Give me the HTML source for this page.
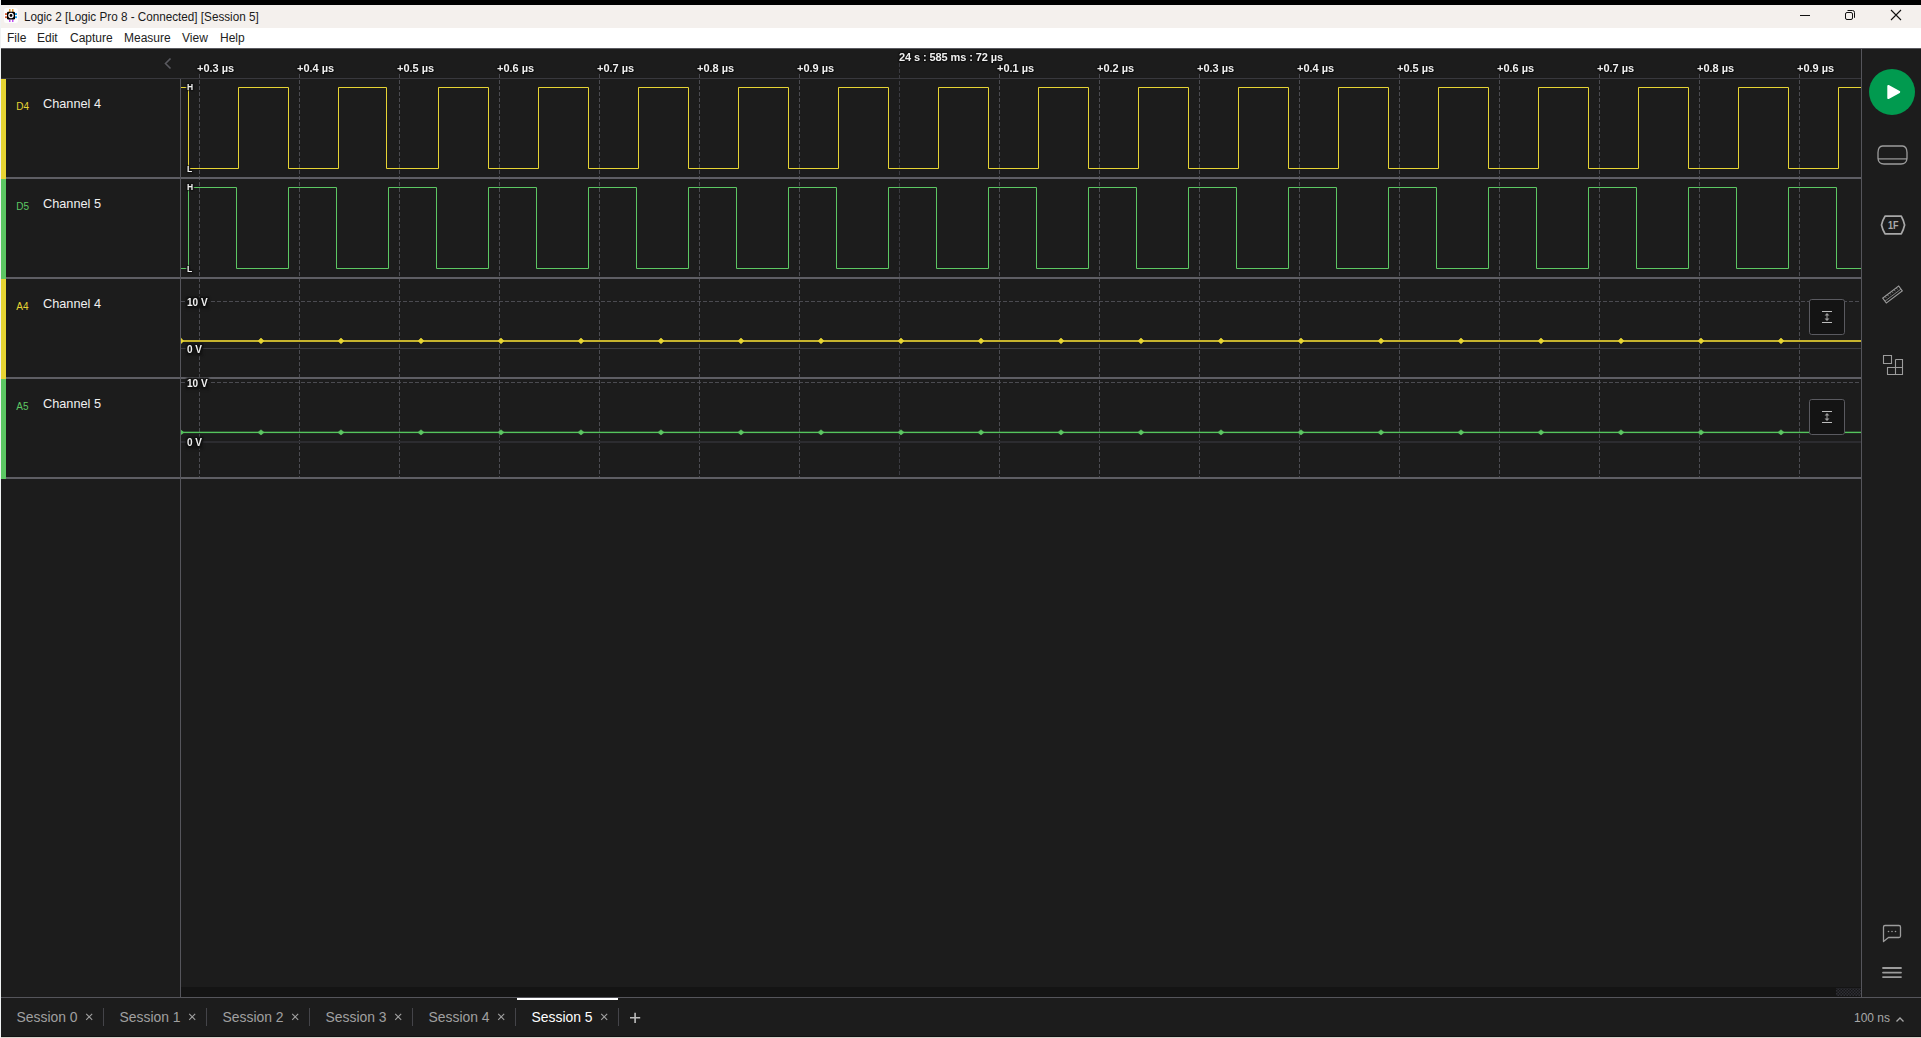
<!DOCTYPE html>
<html><head><meta charset="utf-8"><style>
html,body{margin:0;padding:0;}
body{width:1921px;height:1038px;overflow:hidden;position:relative;background:#1c1c1c;font-family:"Liberation Sans",sans-serif;}
.t{position:absolute;white-space:nowrap;}
#top{position:absolute;left:0;top:0;width:1921px;height:5px;background:#000;}
#title{position:absolute;left:0;top:5px;width:1921px;height:23px;background:#f4f0ed;}
#menu{position:absolute;left:0;top:28px;width:1921px;height:20px;background:#fff;}
#lc{position:absolute;left:0;top:0;width:1px;height:1038px;background:#f0f2f3;}
svg{position:absolute;left:0;top:0;}
</style></head><body>
<div id="top"></div><div id="title"></div><div id="menu"></div>
<svg width="1921" height="1038" viewBox="0 0 1921 1038">
<rect x="0" y="48" width="1921" height="990" fill="#1c1c1c" />
<rect x="0" y="48" width="1921" height="1" fill="#5a5a60" />
<rect x="1" y="78" width="1861" height="1" fill="#38383d" />
<line x1="199.5" y1="74" x2="199.5" y2="478" stroke="#4b4b51" stroke-width="1" stroke-dasharray="4 2"/>
<line x1="299.5" y1="74" x2="299.5" y2="478" stroke="#4b4b51" stroke-width="1" stroke-dasharray="4 2"/>
<line x1="399.5" y1="74" x2="399.5" y2="478" stroke="#4b4b51" stroke-width="1" stroke-dasharray="4 2"/>
<line x1="499.5" y1="74" x2="499.5" y2="478" stroke="#4b4b51" stroke-width="1" stroke-dasharray="4 2"/>
<line x1="599.5" y1="74" x2="599.5" y2="478" stroke="#4b4b51" stroke-width="1" stroke-dasharray="4 2"/>
<line x1="699.5" y1="74" x2="699.5" y2="478" stroke="#4b4b51" stroke-width="1" stroke-dasharray="4 2"/>
<line x1="799.5" y1="74" x2="799.5" y2="478" stroke="#4b4b51" stroke-width="1" stroke-dasharray="4 2"/>
<line x1="899.5" y1="63" x2="899.5" y2="478" stroke="#3b3b41" stroke-width="1" stroke-dasharray="4 2"/>
<line x1="999.5" y1="74" x2="999.5" y2="478" stroke="#4b4b51" stroke-width="1" stroke-dasharray="4 2"/>
<line x1="1099.5" y1="74" x2="1099.5" y2="478" stroke="#4b4b51" stroke-width="1" stroke-dasharray="4 2"/>
<line x1="1199.5" y1="74" x2="1199.5" y2="478" stroke="#4b4b51" stroke-width="1" stroke-dasharray="4 2"/>
<line x1="1299.5" y1="74" x2="1299.5" y2="478" stroke="#4b4b51" stroke-width="1" stroke-dasharray="4 2"/>
<line x1="1399.5" y1="74" x2="1399.5" y2="478" stroke="#4b4b51" stroke-width="1" stroke-dasharray="4 2"/>
<line x1="1499.5" y1="74" x2="1499.5" y2="478" stroke="#4b4b51" stroke-width="1" stroke-dasharray="4 2"/>
<line x1="1599.5" y1="74" x2="1599.5" y2="478" stroke="#4b4b51" stroke-width="1" stroke-dasharray="4 2"/>
<line x1="1699.5" y1="74" x2="1699.5" y2="478" stroke="#4b4b51" stroke-width="1" stroke-dasharray="4 2"/>
<line x1="1799.5" y1="74" x2="1799.5" y2="478" stroke="#4b4b51" stroke-width="1" stroke-dasharray="4 2"/>
<rect x="6" y="177" width="1855" height="2" fill="#5e5e64" />
<rect x="6" y="277" width="1855" height="2" fill="#5e5e64" />
<rect x="6" y="377" width="1855" height="2" fill="#5e5e64" />
<rect x="6" y="477" width="1855" height="2" fill="#5e5e64" />
<rect x="180" y="79" width="1" height="918" fill="#55555b" />
<rect x="1861" y="49" width="1" height="948" fill="#55555b" />
<rect x="1" y="79" width="5" height="100" fill="#e6d433" />
<rect x="1" y="179" width="5" height="100" fill="#5cc763" />
<rect x="1" y="279" width="5" height="100" fill="#e6d433" />
<rect x="1" y="379" width="5" height="100" fill="#5cc763" />
<polyline fill="none" stroke="#e6d433" stroke-width="1" points="181,87.5 188.5,87.5 188.5,168.5 238.5,168.5 238.5,87.5 288.5,87.5 288.5,168.5 338.5,168.5 338.5,87.5 386.5,87.5 386.5,168.5 438.5,168.5 438.5,87.5 488.5,87.5 488.5,168.5 538.5,168.5 538.5,87.5 588.5,87.5 588.5,168.5 638.5,168.5 638.5,87.5 688.5,87.5 688.5,168.5 738.5,168.5 738.5,87.5 788.5,87.5 788.5,168.5 838.5,168.5 838.5,87.5 888.5,87.5 888.5,168.5 938.5,168.5 938.5,87.5 988.5,87.5 988.5,168.5 1038.5,168.5 1038.5,87.5 1088.5,87.5 1088.5,168.5 1138.5,168.5 1138.5,87.5 1188.5,87.5 1188.5,168.5 1238.5,168.5 1238.5,87.5 1288.5,87.5 1288.5,168.5 1338.5,168.5 1338.5,87.5 1388.5,87.5 1388.5,168.5 1438.5,168.5 1438.5,87.5 1488.5,87.5 1488.5,168.5 1538.5,168.5 1538.5,87.5 1588.5,87.5 1588.5,168.5 1638.5,168.5 1638.5,87.5 1688.5,87.5 1688.5,168.5 1738.5,168.5 1738.5,87.5 1788.5,87.5 1788.5,168.5 1838.5,168.5 1838.5,87.5 1861,87.5"/>
<polyline fill="none" stroke="#5cc763" stroke-width="1" points="181,268.5 188.5,268.5 188.5,187.5 236.5,187.5 236.5,268.5 288.5,268.5 288.5,187.5 336.5,187.5 336.5,268.5 388.5,268.5 388.5,187.5 436.5,187.5 436.5,268.5 488.5,268.5 488.5,187.5 536.5,187.5 536.5,268.5 588.5,268.5 588.5,187.5 636.5,187.5 636.5,268.5 688.5,268.5 688.5,187.5 736.5,187.5 736.5,268.5 788.5,268.5 788.5,187.5 836.5,187.5 836.5,268.5 888.5,268.5 888.5,187.5 936.5,187.5 936.5,268.5 988.5,268.5 988.5,187.5 1036.5,187.5 1036.5,268.5 1088.5,268.5 1088.5,187.5 1136.5,187.5 1136.5,268.5 1188.5,268.5 1188.5,187.5 1236.5,187.5 1236.5,268.5 1288.5,268.5 1288.5,187.5 1336.5,187.5 1336.5,268.5 1388.5,268.5 1388.5,187.5 1436.5,187.5 1436.5,268.5 1488.5,268.5 1488.5,187.5 1536.5,187.5 1536.5,268.5 1588.5,268.5 1588.5,187.5 1636.5,187.5 1636.5,268.5 1688.5,268.5 1688.5,187.5 1736.5,187.5 1736.5,268.5 1788.5,268.5 1788.5,187.5 1836.5,187.5 1836.5,268.5 1861,268.5"/>
<line x1="181" y1="301.5" x2="1861" y2="301.5" stroke="#4b4b51" stroke-width="1" stroke-dasharray="4 2"/>
<rect x="181" y="348" width="1680" height="1" fill="#3c3c41" />
<rect x="181" y="340" width="1680" height="2" fill="#c6b32e" />
<path d="M181 337.8 L184 340.9 L181 344 Z" fill="#e6d433"/>
<path d="M261 338.1 L264 340.9 L261 343.7 L258 340.9 Z" fill="#e6d433" stroke="#e6d433" stroke-width="0.6" stroke-linejoin="round"/>
<path d="M341 338.1 L344 340.9 L341 343.7 L338 340.9 Z" fill="#e6d433" stroke="#e6d433" stroke-width="0.6" stroke-linejoin="round"/>
<path d="M421 338.1 L424 340.9 L421 343.7 L418 340.9 Z" fill="#e6d433" stroke="#e6d433" stroke-width="0.6" stroke-linejoin="round"/>
<path d="M501 338.1 L504 340.9 L501 343.7 L498 340.9 Z" fill="#e6d433" stroke="#e6d433" stroke-width="0.6" stroke-linejoin="round"/>
<path d="M581 338.1 L584 340.9 L581 343.7 L578 340.9 Z" fill="#e6d433" stroke="#e6d433" stroke-width="0.6" stroke-linejoin="round"/>
<path d="M661 338.1 L664 340.9 L661 343.7 L658 340.9 Z" fill="#e6d433" stroke="#e6d433" stroke-width="0.6" stroke-linejoin="round"/>
<path d="M741 338.1 L744 340.9 L741 343.7 L738 340.9 Z" fill="#e6d433" stroke="#e6d433" stroke-width="0.6" stroke-linejoin="round"/>
<path d="M821 338.1 L824 340.9 L821 343.7 L818 340.9 Z" fill="#e6d433" stroke="#e6d433" stroke-width="0.6" stroke-linejoin="round"/>
<path d="M901 338.1 L904 340.9 L901 343.7 L898 340.9 Z" fill="#e6d433" stroke="#e6d433" stroke-width="0.6" stroke-linejoin="round"/>
<path d="M981 338.1 L984 340.9 L981 343.7 L978 340.9 Z" fill="#e6d433" stroke="#e6d433" stroke-width="0.6" stroke-linejoin="round"/>
<path d="M1061 338.1 L1064 340.9 L1061 343.7 L1058 340.9 Z" fill="#e6d433" stroke="#e6d433" stroke-width="0.6" stroke-linejoin="round"/>
<path d="M1141 338.1 L1144 340.9 L1141 343.7 L1138 340.9 Z" fill="#e6d433" stroke="#e6d433" stroke-width="0.6" stroke-linejoin="round"/>
<path d="M1221 338.1 L1224 340.9 L1221 343.7 L1218 340.9 Z" fill="#e6d433" stroke="#e6d433" stroke-width="0.6" stroke-linejoin="round"/>
<path d="M1301 338.1 L1304 340.9 L1301 343.7 L1298 340.9 Z" fill="#e6d433" stroke="#e6d433" stroke-width="0.6" stroke-linejoin="round"/>
<path d="M1381 338.1 L1384 340.9 L1381 343.7 L1378 340.9 Z" fill="#e6d433" stroke="#e6d433" stroke-width="0.6" stroke-linejoin="round"/>
<path d="M1461 338.1 L1464 340.9 L1461 343.7 L1458 340.9 Z" fill="#e6d433" stroke="#e6d433" stroke-width="0.6" stroke-linejoin="round"/>
<path d="M1541 338.1 L1544 340.9 L1541 343.7 L1538 340.9 Z" fill="#e6d433" stroke="#e6d433" stroke-width="0.6" stroke-linejoin="round"/>
<path d="M1621 338.1 L1624 340.9 L1621 343.7 L1618 340.9 Z" fill="#e6d433" stroke="#e6d433" stroke-width="0.6" stroke-linejoin="round"/>
<path d="M1701 338.1 L1704 340.9 L1701 343.7 L1698 340.9 Z" fill="#e6d433" stroke="#e6d433" stroke-width="0.6" stroke-linejoin="round"/>
<path d="M1781 338.1 L1784 340.9 L1781 343.7 L1778 340.9 Z" fill="#e6d433" stroke="#e6d433" stroke-width="0.6" stroke-linejoin="round"/>
<line x1="181" y1="382.5" x2="1861" y2="382.5" stroke="#4b4b51" stroke-width="1" stroke-dasharray="4 2"/>
<rect x="181" y="441" width="1680" height="2" fill="#2c2c30" />
<rect x="181" y="431.7" width="1680" height="1.4" fill="#55c45d" />
<path d="M181 429.8 L184.3 432.4 L181 435 Z" fill="#55c45d"/>
<path d="M261 429.8 L264 432.4 L261 435 L258 432.4 Z" fill="#5cc763" stroke="#5cc763" stroke-width="0.6" stroke-linejoin="round"/>
<path d="M341 429.8 L344 432.4 L341 435 L338 432.4 Z" fill="#5cc763" stroke="#5cc763" stroke-width="0.6" stroke-linejoin="round"/>
<path d="M421 429.8 L424 432.4 L421 435 L418 432.4 Z" fill="#5cc763" stroke="#5cc763" stroke-width="0.6" stroke-linejoin="round"/>
<path d="M501 429.8 L504 432.4 L501 435 L498 432.4 Z" fill="#5cc763" stroke="#5cc763" stroke-width="0.6" stroke-linejoin="round"/>
<path d="M581 429.8 L584 432.4 L581 435 L578 432.4 Z" fill="#5cc763" stroke="#5cc763" stroke-width="0.6" stroke-linejoin="round"/>
<path d="M661 429.8 L664 432.4 L661 435 L658 432.4 Z" fill="#5cc763" stroke="#5cc763" stroke-width="0.6" stroke-linejoin="round"/>
<path d="M741 429.8 L744 432.4 L741 435 L738 432.4 Z" fill="#5cc763" stroke="#5cc763" stroke-width="0.6" stroke-linejoin="round"/>
<path d="M821 429.8 L824 432.4 L821 435 L818 432.4 Z" fill="#5cc763" stroke="#5cc763" stroke-width="0.6" stroke-linejoin="round"/>
<path d="M901 429.8 L904 432.4 L901 435 L898 432.4 Z" fill="#5cc763" stroke="#5cc763" stroke-width="0.6" stroke-linejoin="round"/>
<path d="M981 429.8 L984 432.4 L981 435 L978 432.4 Z" fill="#5cc763" stroke="#5cc763" stroke-width="0.6" stroke-linejoin="round"/>
<path d="M1061 429.8 L1064 432.4 L1061 435 L1058 432.4 Z" fill="#5cc763" stroke="#5cc763" stroke-width="0.6" stroke-linejoin="round"/>
<path d="M1141 429.8 L1144 432.4 L1141 435 L1138 432.4 Z" fill="#5cc763" stroke="#5cc763" stroke-width="0.6" stroke-linejoin="round"/>
<path d="M1221 429.8 L1224 432.4 L1221 435 L1218 432.4 Z" fill="#5cc763" stroke="#5cc763" stroke-width="0.6" stroke-linejoin="round"/>
<path d="M1301 429.8 L1304 432.4 L1301 435 L1298 432.4 Z" fill="#5cc763" stroke="#5cc763" stroke-width="0.6" stroke-linejoin="round"/>
<path d="M1381 429.8 L1384 432.4 L1381 435 L1378 432.4 Z" fill="#5cc763" stroke="#5cc763" stroke-width="0.6" stroke-linejoin="round"/>
<path d="M1461 429.8 L1464 432.4 L1461 435 L1458 432.4 Z" fill="#5cc763" stroke="#5cc763" stroke-width="0.6" stroke-linejoin="round"/>
<path d="M1541 429.8 L1544 432.4 L1541 435 L1538 432.4 Z" fill="#5cc763" stroke="#5cc763" stroke-width="0.6" stroke-linejoin="round"/>
<path d="M1621 429.8 L1624 432.4 L1621 435 L1618 432.4 Z" fill="#5cc763" stroke="#5cc763" stroke-width="0.6" stroke-linejoin="round"/>
<path d="M1701 429.8 L1704 432.4 L1701 435 L1698 432.4 Z" fill="#5cc763" stroke="#5cc763" stroke-width="0.6" stroke-linejoin="round"/>
<path d="M1781 429.8 L1784 432.4 L1781 435 L1778 432.4 Z" fill="#5cc763" stroke="#5cc763" stroke-width="0.6" stroke-linejoin="round"/>
<rect x="1809.5" y="299.5" width="35" height="35" rx="2.2" fill="#141414" stroke="#5a5a60" stroke-width="1"/>
<rect x="1822" y="311" width="10" height="1" fill="#bdbdbd"/>
<rect x="1822" y="322" width="10" height="1" fill="#bdbdbd"/>
<path d="M1827 313 L1829.5 315.5 L1824.5 315.5 Z M1827 321 L1829.5 318.5 L1824.5 318.5 Z" fill="#9a9a9a"/>
<rect x="1826.5" y="315" width="1" height="4" fill="#9a9a9a"/>
<rect x="1809.5" y="399.5" width="35" height="35" rx="2.2" fill="#141414" stroke="#5a5a60" stroke-width="1"/>
<rect x="1822" y="411" width="10" height="1" fill="#bdbdbd"/>
<rect x="1822" y="422" width="10" height="1" fill="#bdbdbd"/>
<path d="M1827 413 L1829.5 415.5 L1824.5 415.5 Z M1827 421 L1829.5 418.5 L1824.5 418.5 Z" fill="#9a9a9a"/>
<rect x="1826.5" y="415" width="1" height="4" fill="#9a9a9a"/>
<path d="M170.5 58.5 L165.5 63.5 L170.5 68.5" fill="none" stroke="#5a5a60" stroke-width="1.6"/>
<rect x="181" y="987" width="1680" height="10" fill="#141414" />
<defs><pattern id="chk" x="0" y="0" width="3" height="3" patternUnits="userSpaceOnUse"><rect width="3" height="3" fill="#161618"/><rect x="0" y="0" width="1.5" height="1.5" fill="#2e2e33"/><rect x="1.5" y="1.5" width="1.5" height="1.5" fill="#2e2e33"/></pattern></defs>
<rect x="1836" y="988" width="25" height="8" fill="url(#chk)"/>
<rect x="1" y="997" width="1920" height="1" fill="#55555b" />
<rect x="517" y="998" width="101" height="2" fill="#ffffff" />
<rect x="103" y="1008" width="1" height="18" fill="#444449" />
<rect x="206" y="1008" width="1" height="18" fill="#444449" />
<rect x="309" y="1008" width="1" height="18" fill="#444449" />
<rect x="412" y="1008" width="1" height="18" fill="#444449" />
<rect x="515" y="1008" width="1" height="18" fill="#444449" />
<rect x="618" y="1008" width="1" height="18" fill="#444449" />
<rect x="0" y="1036" width="1921" height="1" fill="#121212" />
<rect x="0" y="1037" width="1921" height="1" fill="#d9d3cb" />
<circle cx="1892" cy="92" r="23" fill="#019a4f"/>
<path d="M1888.3 86 L1899.2 92 L1888.3 98 Z" fill="#ffffff" stroke="#ffffff" stroke-width="2" stroke-linejoin="round"/>
<path d="M1882.5 146 H1902.5 Q1906.8 146.2 1907 152.5 L1907 158.5 Q1906.5 164 1901 164 H1884 Q1878.5 164 1878 158.5 L1878 152.5 Q1878.2 146.2 1882.5 146 Z" fill="none" stroke="#9c9c9c" stroke-width="1.3"/>
<line x1="1878" y1="158.9" x2="1907" y2="158.9" stroke="#9c9c9c" stroke-width="1.2"/>
<path d="M1885 216.2 H1901.3 Q1903.5 220 1904.6 225 Q1903.5 230 1901.3 233.8 H1885 Q1882.6 230 1881.5 225 Q1882.6 220 1885 216.2 Z" fill="none" stroke="#a8a8a8" stroke-width="1.7" stroke-linejoin="round"/>
<g transform="translate(1892.5 294.5) rotate(-37)"><rect x="-10" y="-3" width="20" height="6" fill="none" stroke="#9c9c9c" stroke-width="1.1"/><line x1="-10" y1="0.8" x2="10" y2="0.8" stroke="#9c9c9c" stroke-width="0.7"/><line x1="-7.0" y1="-2.6" x2="-7.0" y2="-1" stroke="#9c9c9c" stroke-width="0.7"/><line x1="-4.2" y1="-2.6" x2="-4.2" y2="-1" stroke="#9c9c9c" stroke-width="0.7"/><line x1="-1.4000000000000004" y1="-2.6" x2="-1.4000000000000004" y2="-1" stroke="#9c9c9c" stroke-width="0.7"/><line x1="1.3999999999999986" y1="-2.6" x2="1.3999999999999986" y2="-1" stroke="#9c9c9c" stroke-width="0.7"/><line x1="4.199999999999999" y1="-2.6" x2="4.199999999999999" y2="-1" stroke="#9c9c9c" stroke-width="0.7"/><line x1="7.0" y1="-2.6" x2="7.0" y2="-1" stroke="#9c9c9c" stroke-width="0.7"/></g>
<path d="M1883.5 355.5 H1891.5 V363.5 H1883.5 Z M1895.5 359.5 H1902.5 V374.5 H1887.5 V367.5 H1902.5 M1895.5 359.5 V374.5" fill="none" stroke="#9c9c9c" stroke-width="1.1"/>
<path d="M1885 925.5 H1899 Q1900.5 925.5 1900.5 927 V936 Q1900.5 937.5 1899 937.5 H1888.5 L1883.5 941.5 V927 Q1883.5 925.5 1885 925.5 Z" fill="none" stroke="#9c9c9c" stroke-width="1.3" stroke-linejoin="round"/>
<circle cx="1888.5" cy="931.5" r="0.8" fill="#9c9c9c"/>
<circle cx="1892.0" cy="931.5" r="0.8" fill="#9c9c9c"/>
<circle cx="1895.5" cy="931.5" r="0.8" fill="#9c9c9c"/>
<line x1="1883" y1="968" x2="1901" y2="968" stroke="#9c9c9c" stroke-width="1.8" stroke-linecap="round"/>
<line x1="1883" y1="972.6" x2="1901" y2="972.6" stroke="#9c9c9c" stroke-width="1.8" stroke-linecap="round"/>
<line x1="1883" y1="977.1" x2="1901" y2="977.1" stroke="#9c9c9c" stroke-width="1.8" stroke-linecap="round"/>
<rect x="1800" y="15" width="10" height="1" fill="#111"/>
<rect x="1845.5" y="12.5" width="7" height="7" rx="1.5" fill="none" stroke="#111" stroke-width="1"/>
<path d="M1847.5 10.5 H1852.5 Q1854.5 10.5 1854.5 12.5 V17.8" fill="none" stroke="#111" stroke-width="1"/>
<path d="M1891 10 L1901 20 M1901 10 L1891 20" stroke="#111" stroke-width="1.1"/>
<rect x="4" y="8" width="14" height="15" rx="2.5" fill="#fdfdfd"/>
<rect x="9" y="9" width="1.5" height="3" fill="#e8a23a"/><rect x="12" y="9" width="1.5" height="3" fill="#e8a23a"/>
<rect x="5" y="13.2" width="2.5" height="1.8" fill="#d85a2a"/><rect x="5" y="16.3" width="2.5" height="1.8" fill="#d85a2a"/>
<rect x="14.5" y="13.2" width="2.5" height="1.8" fill="#1aa0e8"/><rect x="14.5" y="16.3" width="2.5" height="1.8" fill="#1aa0e8"/>
<rect x="9" y="19.5" width="1.5" height="2.5" fill="#c050f0"/><rect x="12" y="19.5" width="1.5" height="2.5" fill="#c050f0"/>
<rect x="7" y="11.8" width="8" height="7.7" rx="1.2" fill="#000"/>
<circle cx="11" cy="15.5" r="2.1" fill="none" stroke="#fff" stroke-width="1.3"/>
<path d="M86.2 1013.8 L92.2 1019.8 M92.2 1013.8 L86.2 1019.8" stroke="#a0a0a0" stroke-width="1.1"/>
<path d="M189.2 1013.8 L195.2 1019.8 M195.2 1013.8 L189.2 1019.8" stroke="#a0a0a0" stroke-width="1.1"/>
<path d="M292.2 1013.8 L298.2 1019.8 M298.2 1013.8 L292.2 1019.8" stroke="#a0a0a0" stroke-width="1.1"/>
<path d="M395.2 1013.8 L401.2 1019.8 M401.2 1013.8 L395.2 1019.8" stroke="#a0a0a0" stroke-width="1.1"/>
<path d="M498.2 1013.8 L504.2 1019.8 M504.2 1013.8 L498.2 1019.8" stroke="#a0a0a0" stroke-width="1.1"/>
<path d="M601.2 1013.8 L607.2 1019.8 M607.2 1013.8 L601.2 1019.8" stroke="#a0a0a0" stroke-width="1.1"/>
<path d="M630 1017.8 H640.2 M635.1 1012.7 V1023" stroke="#bdbdbd" stroke-width="1.6"/>

</svg>
<div id="lc"></div>
<div class="t" style="left:24.3px;top:11px;font-size:12.4px;line-height:12.4px;color:#1a1a1a;font-weight:normal;transform:scaleX(0.944);transform-origin:0 0;">Logic 2 [Logic Pro 8 - Connected] [Session 5]</div>
<div class="t" style="left:7px;top:32px;font-size:12px;line-height:12px;color:#222;font-weight:normal;">File</div>
<div class="t" style="left:37px;top:32px;font-size:12px;line-height:12px;color:#222;font-weight:normal;">Edit</div>
<div class="t" style="left:70px;top:32px;font-size:12px;line-height:12px;color:#222;font-weight:normal;">Capture</div>
<div class="t" style="left:124px;top:32px;font-size:12px;line-height:12px;color:#222;font-weight:normal;">Measure</div>
<div class="t" style="left:182px;top:32px;font-size:12px;line-height:12px;color:#222;font-weight:normal;">View</div>
<div class="t" style="left:220px;top:32px;font-size:12px;line-height:12px;color:#222;font-weight:normal;">Help</div>
<div class="t" style="left:196.5px;top:63px;font-size:11px;line-height:11px;color:#f0f0f0;font-weight:bold;text-shadow:-1px -1px 1px #111,1px -1px 1px #111,-1px 1px 1px #111,1px 1px 1px #111,0 0 2px #000;will-change:transform;">+0.3 µs</div>
<div class="t" style="left:296.5px;top:63px;font-size:11px;line-height:11px;color:#f0f0f0;font-weight:bold;text-shadow:-1px -1px 1px #111,1px -1px 1px #111,-1px 1px 1px #111,1px 1px 1px #111,0 0 2px #000;will-change:transform;">+0.4 µs</div>
<div class="t" style="left:396.5px;top:63px;font-size:11px;line-height:11px;color:#f0f0f0;font-weight:bold;text-shadow:-1px -1px 1px #111,1px -1px 1px #111,-1px 1px 1px #111,1px 1px 1px #111,0 0 2px #000;will-change:transform;">+0.5 µs</div>
<div class="t" style="left:496.5px;top:63px;font-size:11px;line-height:11px;color:#f0f0f0;font-weight:bold;text-shadow:-1px -1px 1px #111,1px -1px 1px #111,-1px 1px 1px #111,1px 1px 1px #111,0 0 2px #000;will-change:transform;">+0.6 µs</div>
<div class="t" style="left:596.5px;top:63px;font-size:11px;line-height:11px;color:#f0f0f0;font-weight:bold;text-shadow:-1px -1px 1px #111,1px -1px 1px #111,-1px 1px 1px #111,1px 1px 1px #111,0 0 2px #000;will-change:transform;">+0.7 µs</div>
<div class="t" style="left:696.5px;top:63px;font-size:11px;line-height:11px;color:#f0f0f0;font-weight:bold;text-shadow:-1px -1px 1px #111,1px -1px 1px #111,-1px 1px 1px #111,1px 1px 1px #111,0 0 2px #000;will-change:transform;">+0.8 µs</div>
<div class="t" style="left:796.5px;top:63px;font-size:11px;line-height:11px;color:#f0f0f0;font-weight:bold;text-shadow:-1px -1px 1px #111,1px -1px 1px #111,-1px 1px 1px #111,1px 1px 1px #111,0 0 2px #000;will-change:transform;">+0.9 µs</div>
<div class="t" style="left:996.5px;top:63px;font-size:11px;line-height:11px;color:#f0f0f0;font-weight:bold;text-shadow:-1px -1px 1px #111,1px -1px 1px #111,-1px 1px 1px #111,1px 1px 1px #111,0 0 2px #000;will-change:transform;">+0.1 µs</div>
<div class="t" style="left:1096.5px;top:63px;font-size:11px;line-height:11px;color:#f0f0f0;font-weight:bold;text-shadow:-1px -1px 1px #111,1px -1px 1px #111,-1px 1px 1px #111,1px 1px 1px #111,0 0 2px #000;will-change:transform;">+0.2 µs</div>
<div class="t" style="left:1196.5px;top:63px;font-size:11px;line-height:11px;color:#f0f0f0;font-weight:bold;text-shadow:-1px -1px 1px #111,1px -1px 1px #111,-1px 1px 1px #111,1px 1px 1px #111,0 0 2px #000;will-change:transform;">+0.3 µs</div>
<div class="t" style="left:1296.5px;top:63px;font-size:11px;line-height:11px;color:#f0f0f0;font-weight:bold;text-shadow:-1px -1px 1px #111,1px -1px 1px #111,-1px 1px 1px #111,1px 1px 1px #111,0 0 2px #000;will-change:transform;">+0.4 µs</div>
<div class="t" style="left:1396.5px;top:63px;font-size:11px;line-height:11px;color:#f0f0f0;font-weight:bold;text-shadow:-1px -1px 1px #111,1px -1px 1px #111,-1px 1px 1px #111,1px 1px 1px #111,0 0 2px #000;will-change:transform;">+0.5 µs</div>
<div class="t" style="left:1496.5px;top:63px;font-size:11px;line-height:11px;color:#f0f0f0;font-weight:bold;text-shadow:-1px -1px 1px #111,1px -1px 1px #111,-1px 1px 1px #111,1px 1px 1px #111,0 0 2px #000;will-change:transform;">+0.6 µs</div>
<div class="t" style="left:1596.5px;top:63px;font-size:11px;line-height:11px;color:#f0f0f0;font-weight:bold;text-shadow:-1px -1px 1px #111,1px -1px 1px #111,-1px 1px 1px #111,1px 1px 1px #111,0 0 2px #000;will-change:transform;">+0.7 µs</div>
<div class="t" style="left:1696.5px;top:63px;font-size:11px;line-height:11px;color:#f0f0f0;font-weight:bold;text-shadow:-1px -1px 1px #111,1px -1px 1px #111,-1px 1px 1px #111,1px 1px 1px #111,0 0 2px #000;will-change:transform;">+0.8 µs</div>
<div class="t" style="left:1796.5px;top:63px;font-size:11px;line-height:11px;color:#f0f0f0;font-weight:bold;text-shadow:-1px -1px 1px #111,1px -1px 1px #111,-1px 1px 1px #111,1px 1px 1px #111,0 0 2px #000;will-change:transform;">+0.9 µs</div>
<div class="t" style="left:899px;top:52px;font-size:11px;line-height:11px;color:#f0f0f0;font-weight:bold;text-shadow:-1px -1px 1px #111,1px -1px 1px #111,-1px 1px 1px #111,1px 1px 1px #111,0 0 2px #000;will-change:transform;letter-spacing:-0.1px;">24 s : 585 ms : 72 µs</div>
<div class="t" style="left:16.3px;top:102px;font-size:10px;line-height:10px;color:#e6d433;font-weight:normal;">D4</div>
<div class="t" style="left:43px;top:96.5px;font-size:13.4px;line-height:13.4px;color:#f0f0f0;font-weight:normal;transform:scaleX(0.95);transform-origin:0 0;">Channel 4</div>
<div class="t" style="left:16.3px;top:202px;font-size:10px;line-height:10px;color:#5cc763;font-weight:normal;">D5</div>
<div class="t" style="left:43px;top:196.5px;font-size:13.4px;line-height:13.4px;color:#f0f0f0;font-weight:normal;transform:scaleX(0.95);transform-origin:0 0;">Channel 5</div>
<div class="t" style="left:16.3px;top:302px;font-size:10px;line-height:10px;color:#e6d433;font-weight:normal;">A4</div>
<div class="t" style="left:43px;top:296.5px;font-size:13.4px;line-height:13.4px;color:#f0f0f0;font-weight:normal;transform:scaleX(0.95);transform-origin:0 0;">Channel 4</div>
<div class="t" style="left:16.3px;top:402px;font-size:10px;line-height:10px;color:#5cc763;font-weight:normal;">A5</div>
<div class="t" style="left:43px;top:396.5px;font-size:13.4px;line-height:13.4px;color:#f0f0f0;font-weight:normal;transform:scaleX(0.95);transform-origin:0 0;">Channel 5</div>
<div class="t" style="left:186.5px;top:82.5px;font-size:8.5px;line-height:8.5px;color:#f0f0f0;font-weight:bold;text-shadow:-1px -1px 1px #111,1px -1px 1px #111,-1px 1px 1px #111,1px 1px 1px #111,0 0 2px #000;will-change:transform;">H</div>
<div class="t" style="left:186.5px;top:165px;font-size:8.5px;line-height:8.5px;color:#f0f0f0;font-weight:bold;text-shadow:-1px -1px 1px #111,1px -1px 1px #111,-1px 1px 1px #111,1px 1px 1px #111,0 0 2px #000;will-change:transform;">L</div>
<div class="t" style="left:186.5px;top:182.5px;font-size:8.5px;line-height:8.5px;color:#f0f0f0;font-weight:bold;text-shadow:-1px -1px 1px #111,1px -1px 1px #111,-1px 1px 1px #111,1px 1px 1px #111,0 0 2px #000;will-change:transform;">H</div>
<div class="t" style="left:186.5px;top:265px;font-size:8.5px;line-height:8.5px;color:#f0f0f0;font-weight:bold;text-shadow:-1px -1px 1px #111,1px -1px 1px #111,-1px 1px 1px #111,1px 1px 1px #111,0 0 2px #000;will-change:transform;">L</div>
<div class="t" style="left:186.5px;top:297.5px;font-size:10px;line-height:10px;color:#f0f0f0;font-weight:bold;text-shadow:-1px -1px 1px #111,1px -1px 1px #111,-1px 1px 1px #111,1px 1px 1px #111,0 0 2px #000;will-change:transform;background:#161616;box-shadow:0 0 2px 1px #161616;">10 V</div>
<div class="t" style="left:186.5px;top:344.5px;font-size:10px;line-height:10px;color:#f0f0f0;font-weight:bold;text-shadow:-1px -1px 1px #111,1px -1px 1px #111,-1px 1px 1px #111,1px 1px 1px #111,0 0 2px #000;will-change:transform;background:#161616;box-shadow:0 0 2px 1px #161616;">0 V</div>
<div class="t" style="left:186.5px;top:378.5px;font-size:10px;line-height:10px;color:#f0f0f0;font-weight:bold;text-shadow:-1px -1px 1px #111,1px -1px 1px #111,-1px 1px 1px #111,1px 1px 1px #111,0 0 2px #000;will-change:transform;background:#161616;box-shadow:0 0 2px 1px #161616;">10 V</div>
<div class="t" style="left:186.5px;top:437.5px;font-size:10px;line-height:10px;color:#f0f0f0;font-weight:bold;text-shadow:-1px -1px 1px #111,1px -1px 1px #111,-1px 1px 1px #111,1px 1px 1px #111,0 0 2px #000;will-change:transform;background:#161616;box-shadow:0 0 2px 1px #161616;">0 V</div>
<div class="t" style="left:1887.6px;top:220.3px;font-size:11px;line-height:11px;color:#ababab;font-weight:bold;transform:scaleX(0.82);transform-origin:0 0;">1F</div>
<div class="t" style="left:16.5px;top:1010.5px;font-size:13.9px;line-height:13.9px;color:#a0a0a0;font-weight:normal;">Session 0</div>
<div class="t" style="left:119.5px;top:1010.5px;font-size:13.9px;line-height:13.9px;color:#a0a0a0;font-weight:normal;">Session 1</div>
<div class="t" style="left:222.5px;top:1010.5px;font-size:13.9px;line-height:13.9px;color:#a0a0a0;font-weight:normal;">Session 2</div>
<div class="t" style="left:325.5px;top:1010.5px;font-size:13.9px;line-height:13.9px;color:#a0a0a0;font-weight:normal;">Session 3</div>
<div class="t" style="left:428.5px;top:1010.5px;font-size:13.9px;line-height:13.9px;color:#a0a0a0;font-weight:normal;">Session 4</div>
<div class="t" style="left:531.5px;top:1010.5px;font-size:13.9px;line-height:13.9px;color:#ffffff;font-weight:normal;">Session 5</div>
<div class="t" style="left:1854px;top:1011.7px;font-size:12px;line-height:12px;color:#a8a8a8;font-weight:normal;">100 ns</div>
<svg width="18" height="10" style="left:1895px;top:1014px" viewBox="0 0 18 10"><path d="M1.5 7.5 L5 4 L8.5 7.5" fill="none" stroke="#a8a8a8" stroke-width="1.3"/></svg>
</body></html>
